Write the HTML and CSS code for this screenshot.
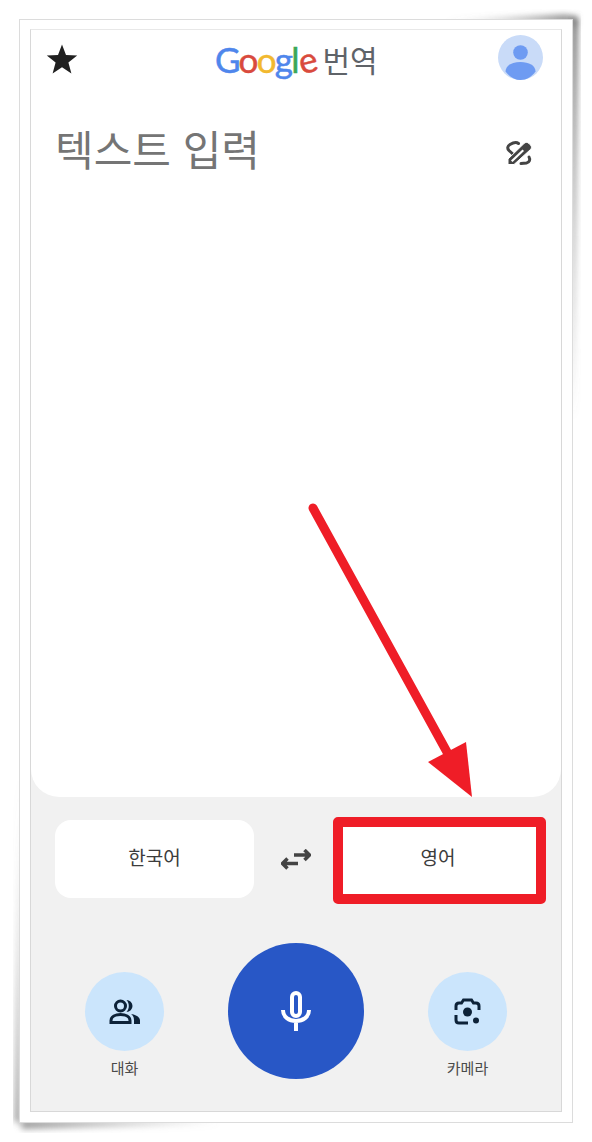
FILE: index.html
```html
<!DOCTYPE html>
<html lang="ko">
<head>
<meta charset="utf-8">
<title>Google 번역</title>
<link rel="stylesheet" href="styles.css">
</head>
<body>
<div class="sheet">
  <svg class="curl" width="592" height="1142" viewBox="0 0 592 1142" aria-hidden="true">
    <defs>
      <filter id="blur" x="-40%" y="-40%" width="180%" height="180%"><feGaussianBlur stdDeviation="3"/></filter>
      <linearGradient id="fadeTop" x1="0" x2="1" y1="0" y2="0"><stop offset="0" stop-color="#777" stop-opacity="0"/><stop offset="1" stop-color="#777"/></linearGradient>
      <linearGradient id="fadeRight" x1="0" x2="0" y1="0" y2="1"><stop offset="0" stop-color="#777"/><stop offset="1" stop-color="#777" stop-opacity="0"/></linearGradient>
      <linearGradient id="fadeLeft" x1="0" x2="0" y1="0" y2="1"><stop offset="0" stop-color="#888" stop-opacity="0"/><stop offset="1" stop-color="#888"/></linearGradient>
      <linearGradient id="fadeBottom" x1="0" x2="1" y1="0" y2="0"><stop offset="0" stop-color="#999"/><stop offset="1" stop-color="#999" stop-opacity="0"/></linearGradient>
    </defs>
    <path d="M440 21L565 15L577 17L574 30L572 22Z" fill="url(#fadeTop)" filter="url(#blur)"/>
    <path d="M571 20L578 17L575 420L571 420Z" fill="url(#fadeRight)" filter="url(#blur)"/>
    <path d="M20 760L15 1122L20 1122Z" fill="url(#fadeLeft)" filter="url(#blur)"/>
    <path d="M20 1120L22 1129L220 1124L220 1120Z" fill="url(#fadeBottom)" filter="url(#blur)"/>
  </svg>
  <main class="app">
    <div class="screen">
      <section class="panel">
        <header class="topbar">
          <svg class="star" width="32" height="30" viewBox="0 0 32 30"><path d="M16 0.500l4 10.600 11.200.5-8.800 7 3 10.900L16 23.300l-9.400 6.200 3-10.900-8.800-7 11.200-.5z"/></svg>
          <div class="brand">
            <span class="logo"><span class="b">G</span><span class="r">o</span><span class="y">o</span><span class="b">g</span><span class="g">l</span><span class="r e">e</span></span>
            <span class="brand-name">번역</span>
          </div>
          <svg class="avatar" width="45" height="45" viewBox="0 0 45 45">
            <circle cx="22.500" cy="22.500" r="22.500" fill="#c9dbf8"/>
            <circle cx="22.500" cy="17.500" r="7.300" fill="#6e9bf2"/>
            <path d="M7.500 36.500c0-6 6.500-9.500 15-9.500s15 3.500 15 9.500c-3.800 5.300-9 8.500-15 8.500s-11.200-3.200-15-8.500z" fill="#6e9bf2"/>
          </svg>
        </header>
        <div class="input-row">
          <div class="placeholder">텍스트 입력</div>
          <svg class="pen" width="26" height="26" viewBox="0 0 26 26">
            <path class="pen-line" d="M9 16L3 10.500C1 8.500 1.500 6 4 4.500C6.500 3 10 1.500 12.500 3.500"/>
            <path class="pen-line" d="M23 17C24.500 19.500 23.500 22.500 20.500 23L15 23.500"/>
            <path class="pen-body" d="M2 24.500V19L18 3.500C19.500 2 21.500 2 23 3.500L24.500 5C25.800 6.500 25.800 8 24.500 9.500L8 24.500Z"/>
            <path class="pen-gap" d="M5 20.500L16.500 9.500L18 11L6.500 22Z"/>
          </svg>
        </div>
      </section>
      <section class="controls">
        <div class="lang-row">
          <button class="lang lang-source">한국어</button>
          <div class="swap">
            <svg width="30" height="24" viewBox="0 0 30 24"><path d="M13 6H28M23.500 1l5 5-5 5M17 14.500H2M6.500 9.500l-5 5 5 5"/></svg>
          </div>
          <button class="lang lang-target">영어</button>
        </div>
        <div class="action-row">
          <div class="action">
            <div class="action-circle">
              <svg width="32" height="26" viewBox="0 0 32 26">
                <circle class="ic-line" cx="11.500" cy="7" r="5"/>
                <path class="ic-line" d="M2 23.500v-2c0-4 4.500-6 9.500-6s9.500 2 9.500 6v2z"/>
                <path class="ic-fill" d="M17.500 1a6 6 0 0 1 0 12c1.500-1.500 2.300-3.600 2.300-6s-.8-4.500-2.300-6zM22 15c5 .8 9 3 9 6.500V25h-6v-4c0-2.500-1-4.500-3-6z"/>
              </svg>
            </div>
            <span class="action-label">대화</span>
          </div>
          <button class="mic">
            <svg width="34" height="40" viewBox="0 0 34 40">
              <rect class="mic-line" x="13" y="2" width="8" height="23" rx="4"/>
              <path class="mic-line" d="M4 19c0 7 6 11 13 11s13-4 13-11M17 30v10"/>
            </svg>
          </button>
          <div class="action">
            <div class="action-circle">
              <svg width="27" height="27" viewBox="0 0 27 27">
                <path class="ic-line" d="M2 12V8c0-2 1-3 3-3h2.500L9.500 2h8l2 3H22c2 0 3 1 3 3v4M2 17v5c0 2 1 3 3 3h9"/>
                <circle class="ic-fill" cx="13.500" cy="14" r="4.500"/>
                <circle class="ic-fill" cx="22" cy="22.500" r="3"/>
              </svg>
            </div>
            <span class="action-label">카메라</span>
          </div>
        </div>
      </section>
    </div>
  </main>
  <svg class="arrow" width="180" height="310" viewBox="0 0 180 310" aria-hidden="true">
    <path class="arrow-shaft" d="M13 10L147 254"/>
    <path class="arrow-head" d="M128 264L166 244L172 299Z"/>
  </svg>
</div>
</body>
</html>
```
FILE: styles.css
```css
* { box-sizing: border-box; }
html, body { margin: 0; padding: 0; background: #fff; }
body { width: 592px; height: 1142px; overflow: hidden; font-family: "Noto Sans CJK KR", "Noto Sans", sans-serif; }
.sheet { position: relative; width: 592px; height: 1142px; padding: 19px 18px 18px 19px; }
.curl { position: absolute; left: 0; top: 0; }
.app { position: relative; display: flex; flex-direction: column; width: 554px; height: 1104px; padding: 9px 10px 10px 10px; background: #fff; border: 1px solid #dcdcdc; }
.screen { flex: 1; display: flex; flex-direction: column; background: #f1f1f1; border: 1px solid #d8d8d8; border-top-color: #e8e8e8; }
.panel { height: 767px; background: #fff; border-radius: 0 0 28px 28px; }
.topbar { display: flex; align-items: flex-start; justify-content: space-between; padding: 5px 18px 0 15px; height: 92px; position: relative; }
.star { margin-top: 9px; fill: #202020; }
.brand { display: flex; align-items: center; position: absolute; left: 184px; top: 5px; height: 48px; }
.logo { font-family: "Lato", sans-serif; font-size: 35px; font-weight: 400; letter-spacing: -1.750px; line-height: 48px; -webkit-text-stroke: 0.5px; }
.logo .e { display: inline-block; transform: rotate(-14deg); }
.b { color: #4f86ec; } .r { color: #d94a3d; } .y { color: #f2b92f; } .g { color: #3aa757; }
.brand-name { margin-left: 8px; font-size: 30px; line-height: 40px; color: #5f6368; }
.input-row { display: flex; align-items: flex-start; justify-content: space-between; padding: 0 29px 0 24px; }
.placeholder { font-size: 42px; line-height: 56px; color: #757575; margin-top: -2px; }
.pen { margin-top: 18px; }
.pen-line { fill: none; stroke: #444; stroke-width: 3; stroke-linecap: round; }
.pen-body { fill: #444; stroke: #fff; stroke-width: 1; }
.pen-gap { fill: #fff; }
.controls { flex: 1; padding-top: 20px; }
.lang-row { display: flex; align-items: flex-start; padding-left: 24px; }
.lang { font: inherit; font-size: 19px; color: #3c3c3c; background: #fff; border: 0; padding: 0; }
.lang-source { width: 199px; height: 78px; margin-top: 3px; border-radius: 16px; padding-bottom: 6px; }
.lang-target { width: 213px; height: 87px; border: 10px solid #ef1d27; border-radius: 5px; padding: 0 3px 9px 0; }
.swap { width: 79px; height: 87px; padding-left: 5px; display: flex; align-items: center; justify-content: center; }
.swap svg { fill: none; stroke: #444; stroke-width: 3.500; }
.action-row { display: flex; align-items: flex-start; padding-left: 54px; margin-top: 39px; }
.action { width: 79px; display: flex; flex-direction: column; align-items: center; padding-top: 29px; }
.action-circle { width: 79px; height: 79px; border-radius: 50%; background: #cbe5fc; display: flex; align-items: center; justify-content: center; }
.action-label { font-size: 15px; line-height: 20px; margin-top: 7px; color: #4a4a4a; }
.ic-line { fill: none; stroke: #0d2238; stroke-width: 3; }
.ic-fill { fill: #0d2238; }
.mic { width: 136px; height: 136px; margin: 0 64px; border: 0; padding: 0; border-radius: 50%; background: #2857c6; display: flex; align-items: center; justify-content: center; }
.mic-line { fill: none; stroke: #fff; stroke-width: 4; }
.arrow { position: absolute; left: 300px; top: 498px; }
.arrow-shaft { fill: none; stroke: #ef1d27; stroke-width: 9; stroke-linecap: round; }
.arrow-head { fill: #ef1d27; }
```
